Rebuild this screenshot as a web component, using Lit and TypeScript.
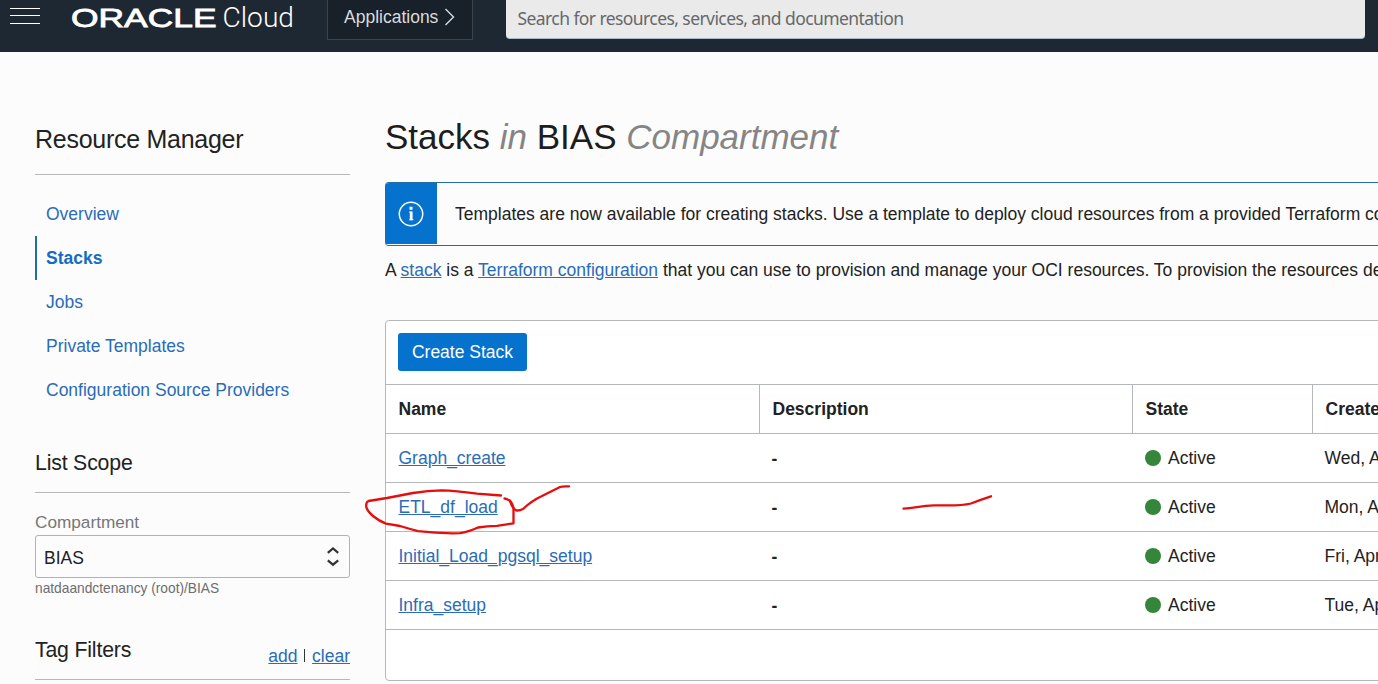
import { LitElement, html, css, svg } from "lit";
import { customElement } from "lit/decorators.js";
import { classMap } from "lit/directives/class-map.js";

const NAV = ["Overview", "Stacks", "Jobs", "Private Templates", "Configuration Source Providers"];

const STACKS = [
  { name: "Graph_create", created: "Wed, Apr" },
  { name: "ETL_df_load", created: "Mon, Apr" },
  { name: "Initial_Load_pgsql_setup", created: "Fri, Apr" },
  { name: "Infra_setup", created: "Tue, Apr" },
];

@customElement("cloud-header")
class CloudHeader extends LitElement {
  static styles = css`
    :host { display: flex; height: 52px; background: #1e2833; overflow: hidden; align-items: flex-start; }
    .menu { display: block; width: 30px; height: 30px; margin-left: 10px; }
    .logo { display: block; width: 230px; height: 36px; margin-left: 30px; }
    .oracle { font: 400 25px "Liberation Sans", Arial, sans-serif; fill: #fff; stroke: #fff; stroke-width: 0.8px; }
    .cloud { font: 300 27px "Roboto", sans-serif; fill: #fff; }
    .apps {
      display: flex; box-sizing: border-box; width: 146px; height: 40px; margin-left: 27px; padding: 0 0 5px 16px;
      align-items: center; gap: 6px; background: #18202a; border: 1px solid #3b434f; border-top: 0;
      color: #d8dbdd; font: 17.5px/20px "Liberation Sans", Arial, sans-serif;
    }
    .search {
      box-sizing: border-box; width: 859px; height: 39px; margin-left: 33px; padding: 6px 0 0 11.5px;
      background: #eaeaea; border-bottom: 1px solid #a9bbc9; border-radius: 0 0 4px 4px;
      color: #66686b; font: 400 17.5px/25px "Noto Sans", sans-serif; letter-spacing: -0.58px; white-space: nowrap;
    }
  `;
  render() {
    return html`
      <svg class="menu" viewBox="0 0 30 30" stroke="#fff" stroke-width="1.2">
        <path d="M0 8.5h30M0 15.5h30M0 23.5h30" />
      </svg>
      <svg class="logo" viewBox="0 0 230 36">
        <text class="oracle" x="1" y="26.5" textLength="145.5" lengthAdjust="spacingAndGlyphs">ORACLE</text>
        <text class="cloud" x="152.5" y="27" textLength="71.5" lengthAdjust="spacingAndGlyphs">Cloud</text>
      </svg>
      <div class="apps">
        <span>Applications</span>
        <svg width="11" height="18" viewBox="0 0 11 18" fill="none" stroke="#d8dbdd" stroke-width="1.4">
          <path d="M1.5 1l8 8-8 8" />
        </svg>
      </div>
      <div class="search">Search for resources, services, and documentation</div>
    `;
  }
}

@customElement("side-panel")
class SidePanel extends LitElement {
  static styles = css`
    :host { display: block; width: 315px; font: 17.5px "Liberation Sans", Arial, sans-serif; color: #222; }
    .title { padding: 72px 0 20px; font-size: 25px; line-height: 30px; letter-spacing: -0.27px; border-bottom: 1px solid #b8b8b8; }
    .nav { margin-top: 17px; }
    .item { line-height: 44px; padding-left: 11px; color: #2a6cb8; white-space: nowrap; }
    .item.current { border-left: 2px solid #226fa8; padding-left: 9px; font-weight: 700; color: #146dc2; }
    .section { display: flex; justify-content: space-between; margin-top: 38px; padding-bottom: 16px; border-bottom: 1px solid #b8b8b8; font-size: 21.25px; line-height: 26px; letter-spacing: -0.17px; }
    .label { margin-top: 19px; line-height: 20px; font-size: 17.2px; color: #777; }
    .select { display: flex; box-sizing: border-box; height: 43px; margin-top: 3px; padding: 0 9px 0 8px; align-items: center; justify-content: space-between; border: 1px solid #aeb3b7; border-radius: 3px; }
    .value { padding-top: 3px; }
    .path { margin-top: 2px; font-size: 13.75px; line-height: 18px; color: #6e6e6e; }
    .filters { margin-top: 39px; }
    .actions { font-size: 17.5px; padding-top: 7px; line-height: 24px; height: 19px; letter-spacing: 0; }
    .link { color: #2a6cb8; text-decoration: underline; }
    .bar { display: inline-block; width: 1px; height: 13px; margin: 0 7px 0 6.5px; background: #333; }
  `;
  render() {
    return html`
      <div class="title">Resource Manager</div>
      <div class="nav">
        ${NAV.map((n) => html`<div class=${classMap({ item: true, current: n === "Stacks" })}>${n}</div>`)}
      </div>
      <div class="section">List Scope</div>
      <div class="label">Compartment</div>
      <div class="select">
        <span class="value">BIAS</span>
        <svg width="14" height="20" viewBox="0 0 14 20" fill="none" stroke="#333" stroke-width="2.2">
          <path d="M1.8 5.8l5.2-4.3 5.2 4.3M1.8 13.4l5.2 4.3 5.2-4.3" />
        </svg>
      </div>
      <div class="path">natdaandctenancy (root)/BIAS</div>
      <div class="section filters">
        <span>Tag Filters</span>
        <span class="actions"><span class="link">add</span><i class="bar"></i><span class="link">clear</span></span>
      </div>
    `;
  }
}

@customElement("stack-table")
class StackTable extends LitElement {
  static styles = css`
    :host { display: block; box-sizing: border-box; width: 1100px; border: 1px solid #b4b8bc; border-radius: 4px; background: #fff; font: 17.5px "Liberation Sans", Arial, sans-serif; color: #222; }
    .toolbar { display: flex; box-sizing: border-box; height: 64px; padding: 12px; border-bottom: 1px solid #b4b8bc; }
    .create { height: 38px; width: 129px; border-radius: 3px; background: #0572ce; color: #fff; line-height: 38px; text-align: center; }
    .row { display: grid; grid-template-columns: 374px 373px 180px 1fr; grid-template-rows: 48px; height: 48px; border-bottom: 1px solid #b4b8bc; line-height: 48px; white-space: nowrap; }
    .cell { padding-left: 12.5px; }
    .head { font-weight: 700; }
    .head .cell { border-right: 1px solid #b4b8bc; }
    .link { color: #2a6cb8; text-decoration: underline; }
    .dash { padding-left: 11.5px; font-weight: 700; line-height: 50px; }
    .state { display: flex; align-items: center; gap: 7px; padding-left: 12px; }
    .dot { width: 16px; height: 16px; border-radius: 50%; background: #35863a; }
    .date { padding-left: 11.5px; }
    .foot { height: 50px; }
  `;
  render() {
    return html`
      <div class="toolbar"><div class="create">Create Stack</div></div>
      <div class="row head">
        <div class="cell">Name</div>
        <div class="cell">Description</div>
        <div class="cell">State</div>
        <div class="cell">Created</div>
      </div>
      ${STACKS.map(
        (s) => html`<div class="row">
          <div class="cell"><span class="link">${s.name}</span></div>
          <div class="cell dash">-</div>
          <div class="cell state"><i class="dot"></i>Active</div>
          <div class="cell date">${s.created}</div>
        </div>`
      )}
      <div class="foot"></div>
    `;
  }
}

@customElement("app-root")
class AppRoot extends LitElement {
  static styles = css`
    :host { display: block; position: relative; height: 684px; overflow: hidden; background: #fcfcfc; font: 17.5px "Liberation Sans", Arial, sans-serif; color: #222; }
    .page { display: grid; grid-template-columns: 315px 993px; column-gap: 35px; padding-left: 35px; height: 632px; }
    .main { overflow: hidden; padding-top: 64px; white-space: nowrap; }
    .heading { font-size: 35px; line-height: 42px; height: 66px; color: #1d1d1d; }
    .soft { font-style: italic; color: #858585; }
    .banner { display: flex; box-sizing: border-box; width: 1100px; height: 64px; border: 1px solid #226fa8; border-left: 0; border-radius: 4px; overflow: hidden; }
    .badge { display: flex; width: 52px; height: 61px; align-items: center; justify-content: center; padding-top: 1px; box-sizing: border-box; background: #0572ce; }
    .message { padding-left: 18px; line-height: 62px; }
    .intro { margin-top: 12px; line-height: 24px; height: 62px; }
    .link { color: #2a6cb8; text-decoration: underline; }
    .ink { position: absolute; left: 0; top: 0; pointer-events: none; }
  `;
  render() {
    return html`
      <cloud-header></cloud-header>
      <div class="page">
        <side-panel></side-panel>
        <div class="main">
          <div class="heading">Stacks <span class="soft">in</span> BIAS <span class="soft">Compartment</span></div>
          <div class="banner">
            <div class="badge">
              <svg width="26" height="26" viewBox="0 0 26 26" fill="none" stroke="#fff">
                <circle cx="13" cy="13" r="11.7" stroke-width="1.5" />
                <path d="M13 5.8v3" stroke-width="3" />
                <path d="M11.2 11.1h2.3M11.2 18.7h4.2" stroke-width="1" />
                <path d="M13.2 10.6v8.6" stroke-width="2.8" />
              </svg>
            </div>
            <div class="message">Templates are now available for creating stacks. Use a template to deploy cloud resources from a provided Terraform configuration.</div>
          </div>
          <div class="intro">A <span class="link">stack</span> is a <span class="link">Terraform configuration</span> that you can use to provision and manage your OCI resources. To provision the resources defined</div>
          <stack-table></stack-table>
        </div>
      </div>
      <svg class="ink" width="1378" height="684" fill="none" stroke="#e60d0d" stroke-width="2.3" stroke-linecap="round" stroke-linejoin="round">
        ${svg`
          <path d="M501 495.5L477 493.7Q455 490.5 441.7 490.3Q428 490.5 413 493L387 498L368.5 501Q366 502 366.2 506.5Q367 511 373 516Q379 521 386 523.6L400 526Q410 529 418 531.2Q440 533.8 460 533.2Q468 532 478 527.5Q487 526 497 525.8L513.5 523.3V508Q512 502 509 500.3Q507 498.8 504.5 498.5" />
          <path d="M510 500.7Q512 508 516 510.3Q519 511 523 509Q532 500.5 542 496L560 487Q563 486 569 486.4" />
          <path d="M903.5 508.7C915 508.5 920 505.5 934 505.4S960 506.3 971 503.5Q981 499.5 991 496.3" />
        `}
      </svg>
    `;
  }
}
